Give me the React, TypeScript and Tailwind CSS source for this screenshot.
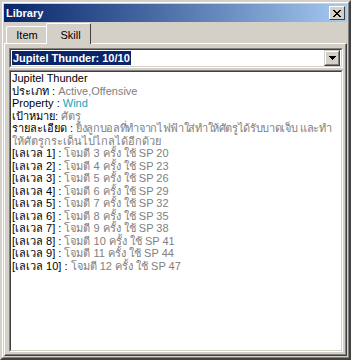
const levels = [
  [1, 3, 20],
  [2, 4, 23],
  [3, 5, 26],
  [4, 6, 29],
  [5, 7, 32],
  [6, 8, 35],
  [7, 9, 38],
  [8, 10, 41],
  [9, 11, 44],
  [10, 12, 47],
];

function Line({ label, value, valueClass = "text-[#808080]" }: { label: string; value?: string; valueClass?: string }) {
  return (
    <div className="h-[12.5px] whitespace-nowrap leading-[12.5px]">
      <span className="text-black">{label}</span>
      {value && <span className={valueClass}>{value}</span>}
    </div>
  );
}

export default function App() {
  return (
    <div
      className="h-[360px] w-[351px] border-2 border-t-[#d4d0c8] border-l-[#d4d0c8] border-r-[#404040] border-b-[#404040] bg-[#d4d0c8] text-[11px]"
      style={{ fontFamily: "'Liberation Sans', 'DejaVu Sans', sans-serif" }}
    >
      <div className="flex h-full flex-col border border-t-white border-l-white border-r-[#808080] border-b-[#808080] p-px">
        {/* title bar */}
        <div className="flex h-[18px] shrink-0 items-center justify-between bg-gradient-to-r from-[#0a246a] to-[#a6caf0] pl-[2px] pr-[2px]">
          <span className="font-bold text-white text-[11px] leading-none">Library</span>
          <button className="flex h-[14px] w-[16px] items-center justify-center border border-t-white border-l-white border-r-[#404040] border-b-[#404040] bg-[#d4d0c8]">
            <svg width="8" height="7" viewBox="0 0 8 7" shapeRendering="crispEdges">
              <path d="M0 0h2v1h-2zM6 0h2v1h-2zM1 1h2v1h-2zM5 1h2v1h-2zM2 2h4v1h-4zM3 3h2v1h-2zM2 4h4v1h-4zM1 5h2v1h-2zM5 5h2v1h-2zM0 6h2v1h-2zM6 6h2v1h-2z" fill="#000" />
            </svg>
          </button>
        </div>

        {/* tabs */}
        <div className="relative z-10 mt-px flex h-[20px] shrink-0 items-end pl-[2px]">
          <div className="-mr-[2px] flex h-[17px] w-[42px] items-center justify-center rounded-t-[2px] border border-b-0 border-t-white border-l-white border-r-[#404040] bg-[#d4d0c8] pt-px text-black">
            Item
          </div>
          <div className="-mb-px flex h-[21px] w-[45px] items-start justify-center rounded-t-[2px] border border-b-0 border-t-white border-l-white border-r-[#404040] bg-[#d4d0c8] pt-[3px] pl-[4px] text-black">
            Skill
          </div>
        </div>

        {/* panel */}
        <div className="flex min-h-0 flex-1 flex-col border border-t-white border-l-white border-r-[#404040] border-b-[#404040]">
          <div className="flex min-h-0 flex-1 flex-col border-r border-b border-[#808080] pt-[4px] pl-[4px] pr-[2px] pb-[2px]">
            {/* combo box */}
            <div className="h-[20px] shrink-0 border border-t-[#808080] border-l-[#808080] border-r-white border-b-white">
              <div className="flex h-full items-center border border-t-[#404040] border-l-[#404040] border-r-[#d4d0c8] border-b-[#d4d0c8] bg-white pl-px pr-px">
                <span className="flex h-[14px] items-center bg-[#0a246a] px-[1px] font-bold text-white">Jupitel Thunder: 10/10</span>
                <span className="flex-1" />
                <span className="flex h-[16px] w-[16px] items-center justify-center border border-t-[#d4d0c8] border-l-[#d4d0c8] border-r-[#404040] border-b-[#404040]">
                  <span className="flex h-full w-full items-center justify-center border border-t-white border-l-white border-r-[#808080] border-b-[#808080] bg-[#d4d0c8]">
                    <svg width="7" height="4" viewBox="0 0 7 4" shapeRendering="crispEdges">
                      <path d="M0 0h7v1h-7zM1 1h5v1h-5zM2 2h3v1h-3zM3 3h1v1h-1z" fill="#000" />
                    </svg>
                  </span>
                </span>
              </div>
            </div>

            {/* content */}
            <div className="mt-[2px] min-h-0 flex-1 border border-t-[#808080] border-l-[#808080] border-r-white border-b-white">
              <div className="h-full border border-t-[#404040] border-l-[#404040] border-r-[#d4d0c8] border-b-[#d4d0c8] bg-white pl-px pt-0">
                <Line label="Jupitel Thunder" />
                <Line label="ประเภท : " value="Active,Offensive" />
                <Line label="Property : " value="Wind" valueClass="text-[#12a5b5]" />
                <Line label="เป้าหมาย: " value="ศัตรู" />
                <Line
                  label="รายละเอียด : "
                  value="ยิงลูกบอลที่ทำจากไฟฟ้าใส่ทำให้ศัตรูได้รับบาดเจ็บ และทำ"
                  valueClass="text-[#808080] tracking-[-0.35px]"
                />
                <div className="h-[12.5px] whitespace-nowrap leading-[12.5px] text-[#808080]">ให้ศัตรูกระเด็นไปไกลได้อีกด้วย</div>
                {levels.map(([lv, hits, sp]) => (
                  <Line key={lv} label={`[เลเวล ${lv}] : `} value={`โจมตี ${hits} ครั้ง ใช้ SP ${sp}`} />
                ))}
              </div>
            </div>
          </div>
        </div>
      </div>
    </div>
  );
}
